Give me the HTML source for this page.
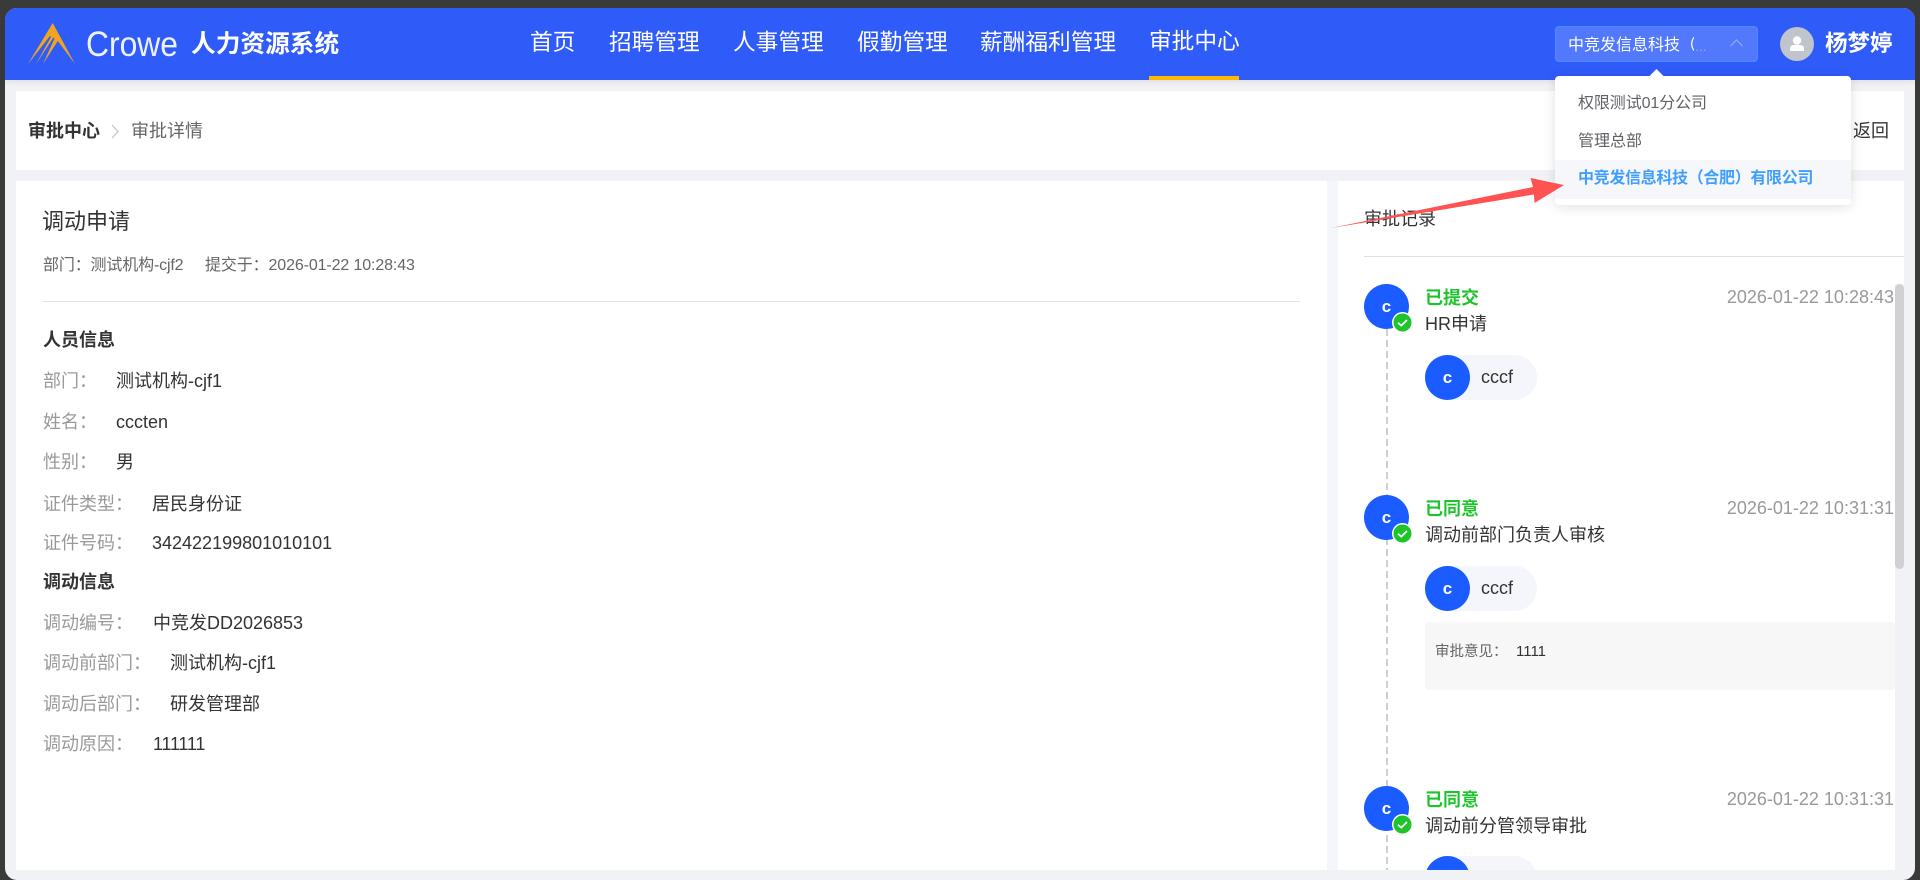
<!DOCTYPE html>
<html lang="zh-CN">
<head>
<meta charset="utf-8">
<title>审批详情</title>
<style>
*{box-sizing:border-box;margin:0;padding:0}
html,body{width:1920px;height:880px;overflow:hidden;background:#3a3a3a}
body{position:relative;font-family:"Liberation Sans","Noto Sans CJK SC",sans-serif;color:#333}
.abs,.t{position:absolute}
.t{white-space:nowrap;line-height:30px;height:30px;font-size:18px}
.win{position:absolute;left:5px;top:8px;width:1910px;height:872px;background:#f1f2f5;border-radius:12px;overflow:hidden}
.hdr{position:absolute;left:5px;top:8px;width:1910px;height:72px;background:#2f5bf9;border-radius:12px 12px 0 0;box-shadow:0 2px 6px rgba(0,0,0,.08)}
.card{position:absolute;background:#fff}
.nav{color:#fff;font-size:22.7px}
.l{color:#999}
.b{font-weight:bold}
.av{position:absolute;width:45px;height:45px;border-radius:50%;background:#1a5cff;color:#fff;font-weight:bold;font-size:17px;line-height:45px;text-align:center}
.pill{position:absolute;left:1425px;width:112px;height:45px;border-radius:23px;background:#f4f6fb}
.st{color:#1ec42b;font-weight:bold}
.dt{color:#999;right:26px}
svg{position:absolute;overflow:visible}
</style>
</head>
<body>
<div class="win"></div>
<div class="hdr"></div>

<!-- logo -->
<svg style="left:0;top:0" width="90" height="80" viewBox="0 0 90 80">
<path d="M52.7 23 L75 64 L57.8 41 L43 64 L54.5 38.5 L53.5 37.5 L36 64 L51 37 L50 36 L28 64 Z" fill="#f0a51f"/>
</svg>
<svg style="left:80px;top:19px" width="110" height="50"><text x="6" y="37" font-family="Liberation Sans" font-size="35" fill="#eef2ff" textLength="92" lengthAdjust="spacingAndGlyphs">Crowe</text></svg>
<div class="t b" style="left:191px;top:30px;font-size:24.7px;color:#fff">人力资源系统</div>

<!-- nav -->
<div class="t nav" style="left:530px;top:27px">首页</div>
<div class="t nav" style="left:609px;top:27px">招聘管理</div>
<div class="t nav" style="left:733px;top:27px">人事管理</div>
<div class="t nav" style="left:857px;top:27px">假勤管理</div>
<div class="t nav" style="left:980px;top:27px">薪酬福利管理</div>
<div class="t nav" style="left:1149px;top:26px">审批中心</div>
<div class="abs" style="left:1149px;top:76px;width:90px;height:4px;background:#ffb800"></div>

<!-- select -->
<div class="abs" style="left:1555px;top:26px;width:203px;height:36px;background:#5279fb;border:1px solid #4a8cf9;border-radius:4px"></div>
<div class="t" style="left:1568px;top:31px;font-size:16px;color:#fff;width:126px;overflow:hidden">中竞发信息科技（</div>
<div class="t" style="left:1695px;top:31px;font-size:14px;color:#9aa5c8">...</div>
<svg style="left:1730px;top:39px" width="13" height="8"><path d="M.5 7 L6.5 1 L12.5 7" fill="none" stroke="#92a9f8" stroke-width="1.2"/></svg>

<!-- user -->
<div class="abs" style="left:1780px;top:27px;width:34px;height:34px;border-radius:50%;background:#c0c4cc"></div>
<svg style="left:1780px;top:27px" width="34" height="34"><circle cx="17" cy="13.5" r="4.2" fill="#fff"/><path d="M10 24 v-2.5 q0-3.5 4-3.5 h6 q4 0 4 3.5 V24 Z" fill="#fff"/></svg>
<div class="t b" style="left:1825px;top:29px;font-size:22.5px;color:#fff">杨梦婷</div>

<!-- breadcrumb -->
<div class="card" style="left:16px;top:91px;width:1888px;height:79px"></div>
<div class="t b" style="left:28px;top:116px">审批中心</div>
<svg style="left:111px;top:124px" width="8" height="15"><path d="M1 1 L7 7.5 L1 14" fill="none" stroke="#c0c4cc" stroke-width="1.2"/></svg>
<div class="t" style="left:131px;top:116px;color:#666">审批详情</div>
<div class="t" style="left:1853px;top:116px">返回</div>

<!-- left card -->
<div class="card" style="left:16px;top:181px;width:1311px;height:689px"></div>
<div class="t" style="left:42px;top:207px;font-size:22px">调动申请</div>
<div class="t" style="left:43px;top:251px;font-size:16px;color:#666;letter-spacing:-.15px">部门：测试机构-cjf2</div>
<div class="t" style="left:205px;top:251px;font-size:16px;color:#666;letter-spacing:-.12px">提交于：2026-01-22 10:28:43</div>
<div class="abs" style="left:43px;top:301px;width:1257px;height:1px;background:#e2e2e2"></div>

<div class="t b" style="left:43px;top:325px">人员信息</div>
<div class="t l" style="left:43px;top:366px">部门：</div><div class="t" style="left:116px;top:366px">测试机构-cjf1</div>
<div class="t l" style="left:43px;top:407px">姓名：</div><div class="t" style="left:116px;top:407px">cccten</div>
<div class="t l" style="left:43px;top:447px">性别：</div><div class="t" style="left:116px;top:447px">男</div>
<div class="t l" style="left:43px;top:489px">证件类型：</div><div class="t" style="left:152px;top:489px">居民身份证</div>
<div class="t l" style="left:43px;top:528px">证件号码：</div><div class="t" style="left:152px;top:528px">342422199801010101</div>
<div class="t b" style="left:43px;top:567px">调动信息</div>
<div class="t l" style="left:43px;top:608px">调动编号：</div><div class="t" style="left:153px;top:608px">中竞发DD2026853</div>
<div class="t l" style="left:43px;top:648px">调动前部门：</div><div class="t" style="left:170px;top:648px">测试机构-cjf1</div>
<div class="t l" style="left:43px;top:689px">调动后部门：</div><div class="t" style="left:170px;top:689px">研发管理部</div>
<div class="t l" style="left:43px;top:729px">调动原因：</div><div class="t" style="left:153px;top:729px;letter-spacing:-.2px">111111</div>

<!-- right card -->
<div class="abs" style="left:1327px;top:181px;width:11px;height:689px;background:#f4f6fb"></div>
<div class="card" style="left:1338px;top:181px;width:566px;height:103px"></div>
<div class="card" style="left:1338px;top:284px;width:557px;height:586px"></div>
<div class="t" style="left:1364px;top:204px">审批记录</div>
<div class="abs" style="left:1364px;top:256px;width:540px;height:1px;background:#dfe1ea"></div>
<div class="abs" style="left:1895px;top:284px;width:9px;height:285px;border-radius:5px;background:#d0d1d3"></div>

<!-- timeline -->
<div class="abs" style="left:1386px;top:329px;width:2px;height:541px;background:repeating-linear-gradient(to bottom,#cfcfcf 0,#cfcfcf 7px,transparent 7px,transparent 11px)"></div>

<!-- item 1 -->
<div class="av" style="left:1364px;top:284px">c</div>
<svg style="left:1392px;top:312px" width="21" height="21"><circle cx="10.5" cy="10.5" r="10.5" fill="#fff"/><circle cx="10.5" cy="10.5" r="9" fill="#1ec42b"/><path d="M6 10.8 L9.3 13.6 L15 8" fill="none" stroke="#fff" stroke-width="1.7"/></svg>
<div class="t st" style="left:1425px;top:283px">已提交</div>
<div class="t dt" style="top:282px">2026-01-22 10:28:43</div>
<div class="t" style="left:1425px;top:309px">HR申请</div>
<div class="pill" style="top:355px"></div>
<div class="av" style="left:1425px;top:355px">c</div>
<div class="t" style="left:1481px;top:362px">cccf</div>

<!-- item 2 -->
<div class="av" style="left:1364px;top:495px">c</div>
<svg style="left:1392px;top:523px" width="21" height="21"><circle cx="10.5" cy="10.5" r="10.5" fill="#fff"/><circle cx="10.5" cy="10.5" r="9" fill="#1ec42b"/><path d="M6 10.8 L9.3 13.6 L15 8" fill="none" stroke="#fff" stroke-width="1.7"/></svg>
<div class="t st" style="left:1425px;top:494px">已同意</div>
<div class="t dt" style="top:493px">2026-01-22 10:31:31</div>
<div class="t" style="left:1425px;top:520px">调动前部门负责人审核</div>
<div class="pill" style="top:566px"></div>
<div class="av" style="left:1425px;top:566px">c</div>
<div class="t" style="left:1481px;top:573px">cccf</div>
<div class="abs" style="left:1425px;top:622px;width:470px;height:68px;background:#f7f7f7;border-radius:4px"></div>
<div class="t" style="left:1435px;top:637px;font-size:14.5px;color:#666">审批意见：</div>
<div class="t" style="left:1516px;top:637px;font-size:15px">1111</div>

<!-- item 3 -->
<div class="av" style="left:1364px;top:786px">c</div>
<svg style="left:1392px;top:814px" width="21" height="21"><circle cx="10.5" cy="10.5" r="10.5" fill="#fff"/><circle cx="10.5" cy="10.5" r="9" fill="#1ec42b"/><path d="M6 10.8 L9.3 13.6 L15 8" fill="none" stroke="#fff" stroke-width="1.7"/></svg>
<div class="t st" style="left:1425px;top:785px">已同意</div>
<div class="t dt" style="top:784px">2026-01-22 10:31:31</div>
<div class="t" style="left:1425px;top:811px">调动前分管领导审批</div>
<div class="abs" style="left:1425px;top:856px;width:112px;height:14px;overflow:hidden">
  <div class="abs" style="left:0;top:0;width:112px;height:45px;border-radius:23px;background:#f4f6fb"></div>
  <div class="abs" style="left:0;top:0;width:45px;height:45px;border-radius:50%;background:#1a5cff"></div>
</div>

<!-- dropdown -->
<div class="abs" style="left:1555px;top:76px;width:296px;height:129px;background:#fff;border-radius:4px;box-shadow:0 2px 12px rgba(0,0,0,.12);overflow:hidden">
  <div class="abs" style="left:0;top:84px;width:296px;height:39px;background:#f5f7fa"></div>
</div>
<svg style="left:1649px;top:69px" width="15" height="8"><path d="M0 7.5 L7.5 0 L15 7.5 Z" fill="#fff"/></svg>
<div class="t" style="left:1578px;top:89px;font-size:16px;color:#606266;letter-spacing:-.1px">权限测试01分公司</div>
<div class="t" style="left:1578px;top:127px;font-size:16px;color:#606266">管理总部</div>
<div class="t b" style="left:1578px;top:164px;font-size:16px;color:#409eff;letter-spacing:-.33px">中竞发信息科技（合肥）有限公司</div>

<!-- red arrow -->
<svg style="left:0;top:0" width="1920" height="880"><path d="M1331 228 L1533 187 L1530.5 178 L1564 185 L1534.5 203 L1534 194.5 Z" fill="#ff5252"/></svg>
</body>
</html>
